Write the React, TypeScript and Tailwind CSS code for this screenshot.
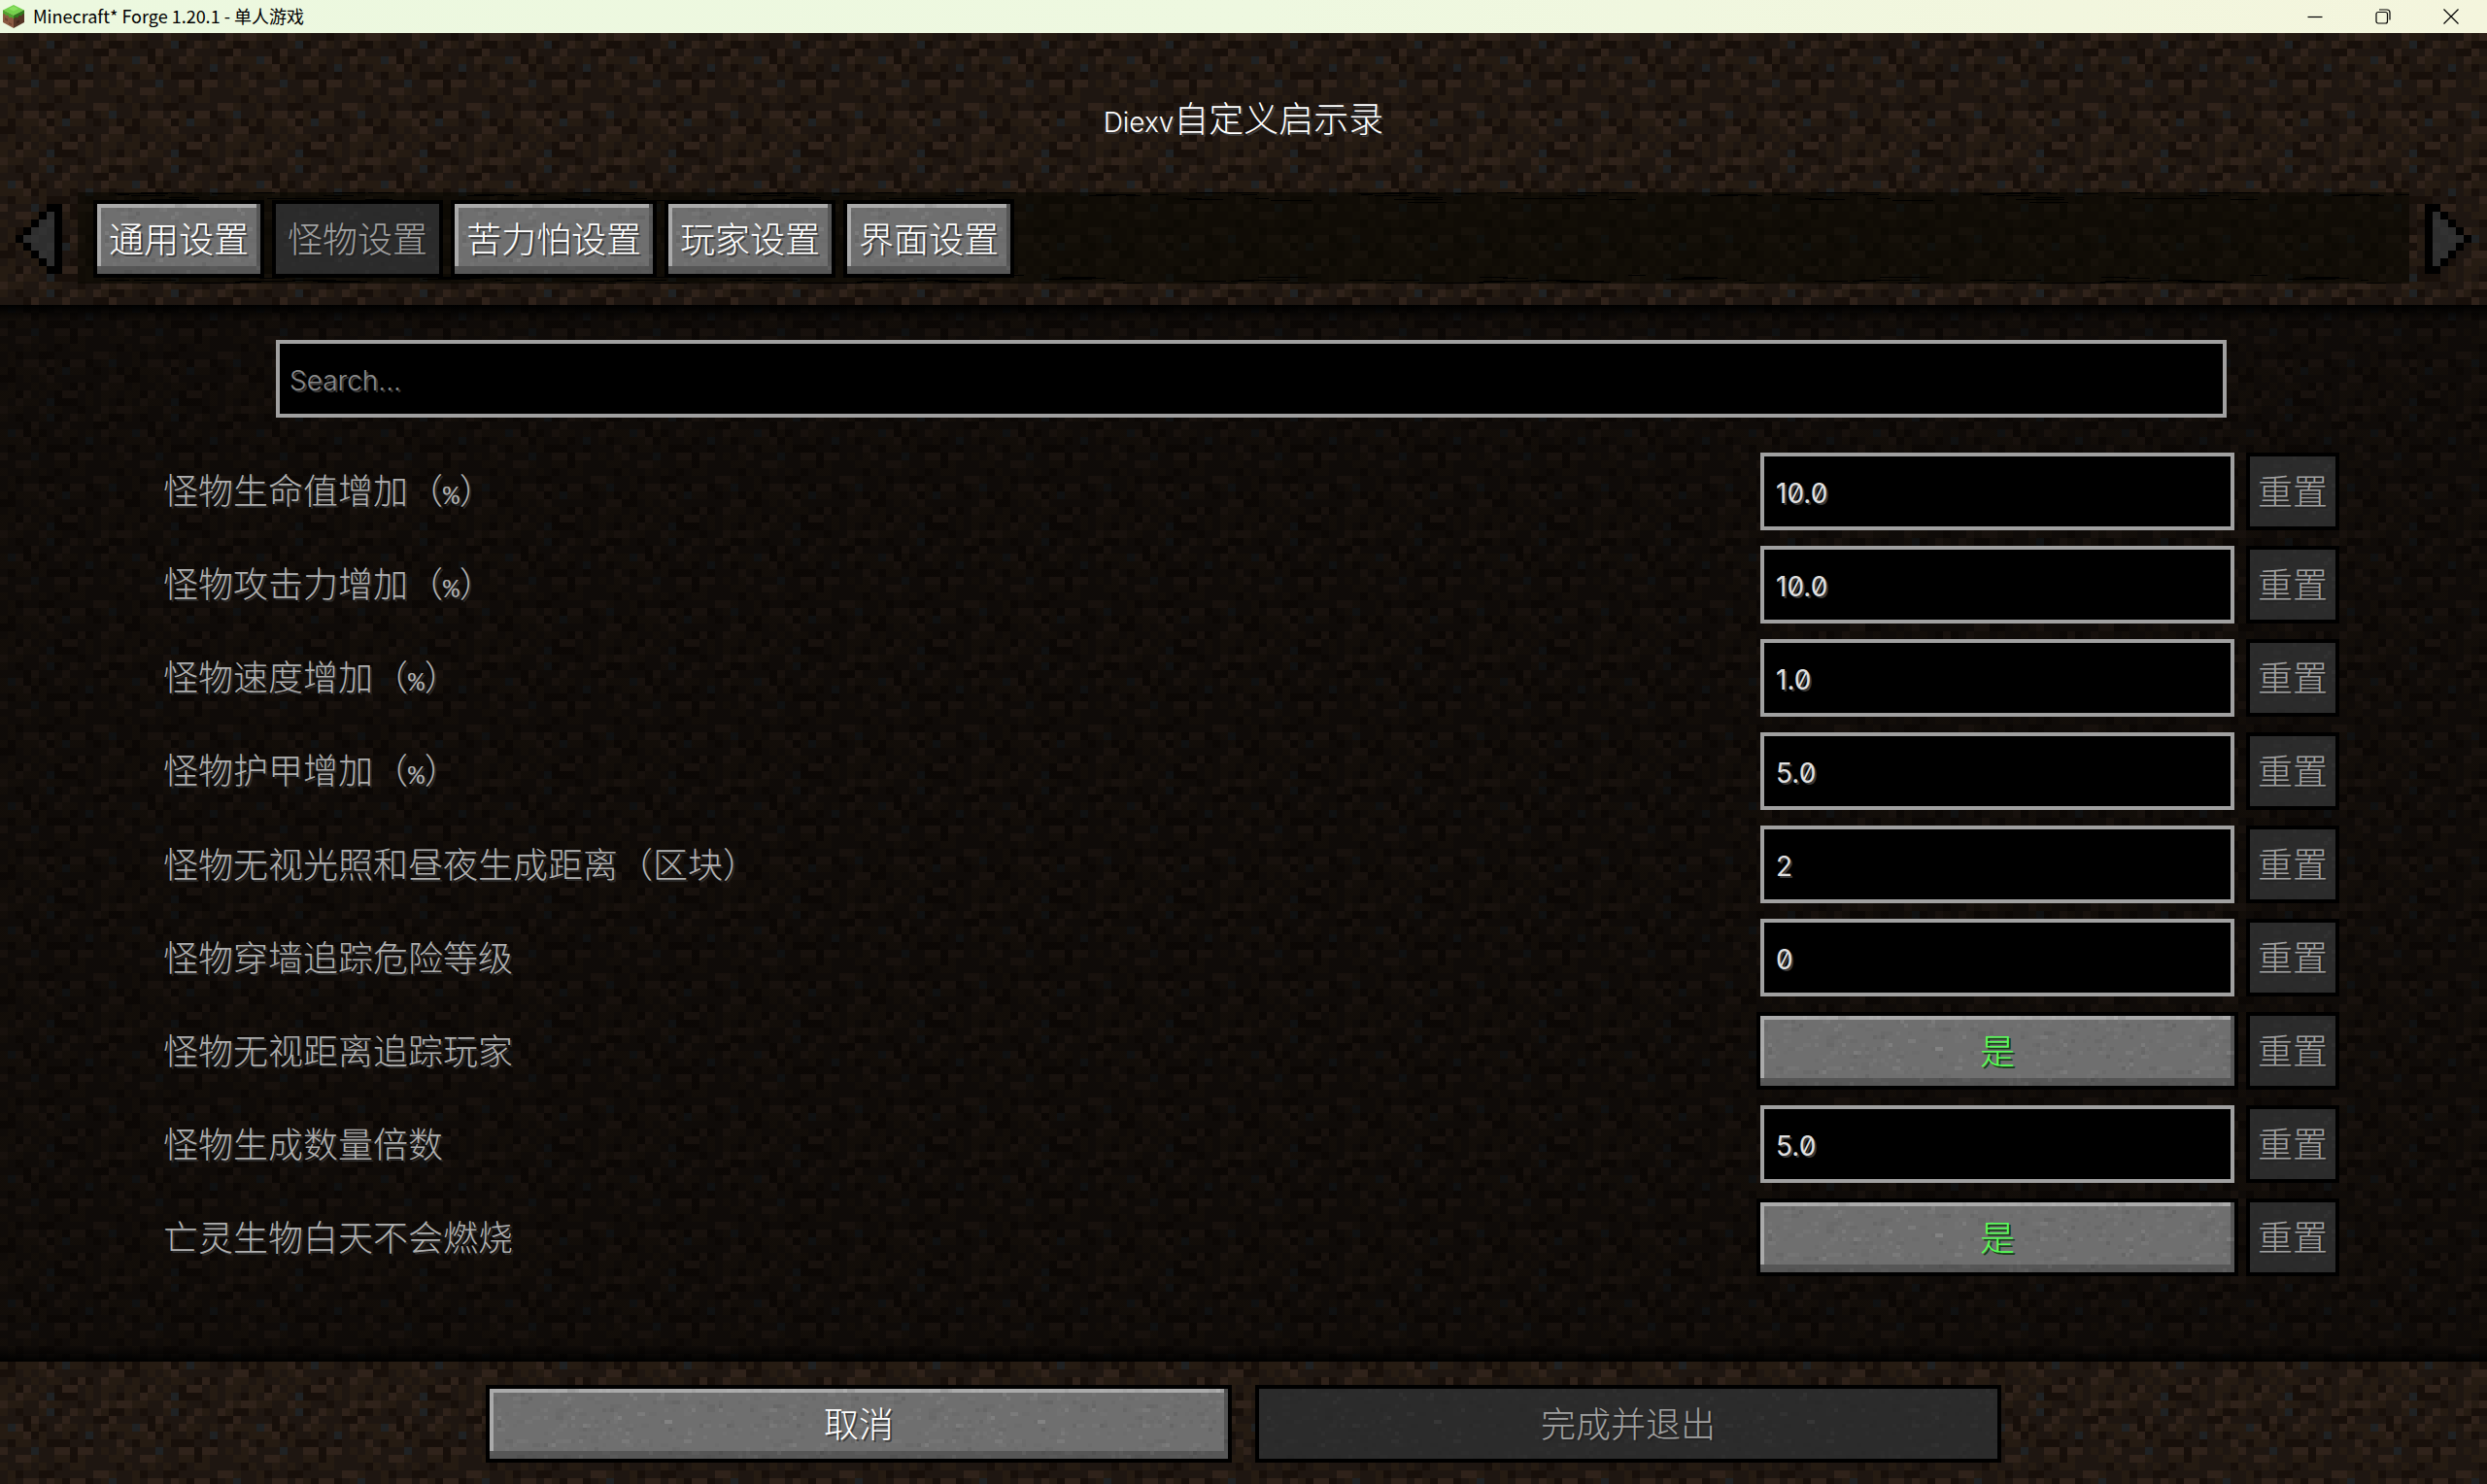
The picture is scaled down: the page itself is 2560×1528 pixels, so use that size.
import React from 'react';
import { clsx } from 'clsx';
import { twMerge } from 'tailwind-merge';

// --- Utility Functions ---
function cn(...inputs: (string | undefined | null | false)[]) {
  return twMerge(clsx(inputs));
}

// --- Data ---

// 16x16 dirt tile: L light, M medium, D dark, K darkest, G gravel
const DIRT = [
  'LMMDDLMMDDKDDLML',
  'MDKDDMGKDLMDLMKK',
  'DDDKLDDDLDDDKKLD',
  'MGLKMKDLMMDMDLMM',
  'MMMLKMDDMKDGDMKD',
  'DKMMDMKKKDDKDDDL',
  'LDDDGDDLLKLLDMDM',
  'DDLLMDDMMKMDDDMM',
  'MDDMDMDKDMMDDDDK',
  'DMKDDKKDDDDDLLMD',
  'DMDLLDLMKLLKDMGD',
  'MKMMMLKMGMMDKDMK',
  'KKDMDMLDDDDDDDLL',
  'DMDDMDMMDKLKDLMM',
  'MMKLDMDKLLDMDMMD',
  'MDLMMDGKKKDMDMDK',
];

const DIRT_COLORS: Record<string, string> = {
  L: '#2f221a',
  M: '#251b12',
  D: '#1e1611',
  K: '#170f0a',
  G: '#1f2224',
};

const ARROW = ['....##', '...#o#', '..#oo#', '.#ooo#', '#oooo#', '.#ooo#', '..#oo#', '...#o#', '....##'];

const TABS = ['通用设置', '怪物设置', '苦力怕设置', '玩家设置', '界面设置'];

interface Option {
  id: string;
  label: string;
  percent?: boolean;
  value: string | boolean;
}

const OPTIONS: Option[] = [
  { id: 'health', label: '怪物生命值增加', percent: true, value: '10.0' },
  { id: 'attack', label: '怪物攻击力增加', percent: true, value: '10.0' },
  { id: 'speed', label: '怪物速度增加', percent: true, value: '1.0' },
  { id: 'armor', label: '怪物护甲增加', percent: true, value: '5.0' },
  { id: 'spawn-distance', label: '怪物无视光照和昼夜生成距离（区块）', value: '2' },
  { id: 'wall-tracking', label: '怪物穿墙追踪危险等级', value: '0' },
  { id: 'ignore-distance', label: '怪物无视距离追踪玩家', value: true },
  { id: 'spawn-count', label: '怪物生成数量倍数', value: '5.0' },
  { id: 'no-burn', label: '亡灵生物白天不会燃烧', value: true },
];

// Small seeded generator, so the grain is the same on every render
function random(seed: number) {
  let s = seed;
  return () => {
    s = (s * 16807) % 2147483647;
    return s / 2147483647;
  };
}

const rand = random(77);
const GRAIN = Array.from({ length: 420 }, () => ({
  x: Math.floor(rand() * 96) * 4,
  y: Math.floor(rand() * 20) * 4,
  w: rand() > 0.7 ? 8 : 4,
  light: rand() > 0.5,
  o: 0.02 + rand() * rand() * 0.08,
}));

const STREAKS = Array.from({ length: 60 }, () => {
  const y = Math.floor(rand() * rand() * 12);
  return { x: Math.floor(rand() * 600), y, w: 8 + Math.floor(rand() * 44) };
});

// --- Textures ---

const Textures: React.FC = () => (
  <svg className="absolute inset-0 h-full w-full" aria-hidden="true" shapeRendering="crispEdges">
    <defs>
      <pattern id="dirt" width="128" height="128" patternUnits="userSpaceOnUse">
        {DIRT.map((row, y) =>
          row.split('').map((c, x) => (
            <rect key={`${x}-${y}`} x={x * 8} y={y * 8} width="8" height="8" fill={DIRT_COLORS[c]} />
          ))
        )}
      </pattern>
      <pattern id="grain" width="384" height="80" patternUnits="userSpaceOnUse">
        {GRAIN.map((g, i) => (
          <rect key={i} x={g.x} y={g.y} width={g.w} height="4" fill={g.light ? '#fff' : '#000'} opacity={g.o} />
        ))}
      </pattern>
      <pattern id="streaks" width="640" height="94" patternUnits="userSpaceOnUse">
        {STREAKS.map((s, i) => (
          <rect key={i} x={s.x} y={i % 2 ? s.y : 93 - s.y} width={s.w} height="1" fill="#000" />
        ))}
      </pattern>
    </defs>
    <rect width="100%" height="100%" fill="url(#dirt)" />
  </svg>
);

const Fill: React.FC<{ pattern: string; className?: string }> = ({ pattern, className }) => (
  <svg
    className={cn('pointer-events-none absolute inset-0 h-full w-full', className)}
    aria-hidden="true"
    shapeRendering="crispEdges"
  >
    <rect width="100%" height="100%" fill={`url(#${pattern})`} />
  </svg>
);

// --- Components ---

const GameButton: React.FC<React.ButtonHTMLAttributes<HTMLButtonElement>> = ({ className, children, disabled, ...props }) => (
  <button
    type="button"
    disabled={disabled}
    className={cn(
      'relative flex h-20 items-center justify-center border-4 border-black pt-0.5 text-4xl leading-none whitespace-nowrap',
      disabled
        ? 'bg-[#2b2b2b] text-[#a0a0a0] [text-shadow:2px_2px_0_#232323]'
        : 'bg-[#6f6f6f] text-white shadow-[inset_0_-8px_0_#565656,inset_-4px_0_0_#565656,inset_4px_4px_0_#aaaaaa] [text-shadow:2px_2px_0_#3e3e3e]',
      className
    )}
    {...props}
  >
    <Fill pattern="grain" className={disabled && 'opacity-40'} />
    <span className="relative">{children}</span>
  </button>
);

const TextBox: React.FC<React.InputHTMLAttributes<HTMLInputElement>> = ({ className, ...props }) => (
  <input
    type="text"
    className={cn(
      'block h-20 min-w-0 border-4 border-[#a0a0a0] bg-black pt-1 text-[28px] font-normal text-[#e0e0e0] slashed-zero outline-none [text-shadow:2px_2px_0_#383838] placeholder:font-light placeholder:text-[#8a8a8a] placeholder:opacity-100',
      className
    )}
    {...props}
  />
);

const ArrowButton: React.FC<{ label: string; flip?: boolean }> = ({ label, flip }) => (
  <button type="button" aria-label={label} disabled className="mt-3 h-[72px] w-12 shrink-0">
    <svg viewBox="0 0 6 9" className={cn('h-full w-full', flip && '-scale-x-100')} shapeRendering="crispEdges">
      {ARROW.map((row, y) =>
        row.split('').map((c, x) =>
          c === '.' ? null : (
            <rect
              key={`${x}-${y}`}
              x={x}
              y={y}
              width="1"
              height="1"
              fill={c === '#' ? '#000' : (x + y) % 3 ? '#2e2e2e' : '#323232'}
            />
          )
        )
      )}
    </svg>
  </button>
);

const GrassBlock: React.FC = () => (
  <svg viewBox="0 0 22 24" className="h-6 w-[22px]" aria-hidden="true">
    <path d="M11 0 22 5.5 11 11 0 5.5Z" fill="#74d14c" />
    <path d="M11 1.5 16 4 11 6.5 6 4Z" fill="#8ae05f" />
    <path d="M0 5.5 11 11V24L0 18Z" fill="#8a5a42" />
    <path d="M22 5.5 11 11V24L22 18Z" fill="#553526" />
    <path d="M0 5.5 11 11V14.5L9 12.5 7 13.5 5 10.5 3 11 1.5 9 0 9.5Z" fill="#4fa52f" />
    <path d="M22 5.5 11 11V14.5L13 12.5 15 13.5 17 10.5 19 11.5 20.5 9 22 9.5Z" fill="#2f7a1c" />
    <path d="M2 13 5 14.5V17L2 15.5ZM6 18 9 19.5V21L6 19.5Z" fill="#6b4230" />
    <path d="M14 17 17 15.5V18L14 19.5Z" fill="#3d251a" />
  </svg>
);

const WindowButton: React.FC<{ label: string; children: React.ReactNode }> = ({ label, children }) => (
  <button type="button" aria-label={label} className="flex h-full w-[70px] items-center justify-center">
    <svg viewBox="0 0 16 16" className="h-4 w-4" fill="none" stroke="#000" strokeWidth="1.2">
      {children}
    </svg>
  </button>
);

const TitleBar: React.FC = () => (
  <div className="flex h-[34px] items-center bg-linear-to-r from-[#ecf8df] via-[#eef8e0] to-[#f4f5dd] pr-[2px] pl-[3px]">
    <GrassBlock />
    <span className="ml-[9px] flex-1 pb-0.5 font-['Noto_Sans_CJK_SC',sans-serif] text-lg leading-none font-normal text-black">
      Minecraft* Forge 1.20.1 - 单人游戏
    </span>
    <WindowButton label="最小化">
      <path d="M0.5 8.5H15.5" />
    </WindowButton>
    <WindowButton label="还原">
      <rect x="1" y="3.5" width="11.5" height="11.5" rx="2" />
      <path d="M4 1H12a3 3 0 0 1 3 3v7.5" />
    </WindowButton>
    <WindowButton label="关闭">
      <path d="M0.5 0.5 15.5 15.5M15.5 0.5 0.5 15.5" />
    </WindowButton>
  </div>
);

const OptionRow: React.FC<{ option: Option }> = ({ option }) => {
  const [value, setValue] = React.useState(option.value);

  return (
    <div className="flex items-center gap-2">
      <label
        htmlFor={option.id}
        className="flex-1 pt-0.5 text-4xl leading-none text-[#b0b0b0] [text-shadow:2px_2px_0_#2a2a2a]"
      >
        {option.label}
        {option.percent && (
          <>
            （<span className="font-['Liberation_Mono',monospace] text-[28px] leading-none">%</span>）
          </>
        )}
      </label>
      <div className="w-[496px]">
        {typeof value === 'boolean' ? (
          <GameButton
            id={option.id}
            onClick={() => setValue(!value)}
            className={cn('w-full', value ? 'text-[#55ff55] [text-shadow:2px_2px_0_#153f15]' : 'text-[#ff5555] [text-shadow:2px_2px_0_#3f1515]')}
          >
            {value ? '是' : '否'}
          </GameButton>
        ) : (
          <div className="flex px-1">
            <TextBox id={option.id} value={value} onChange={(e) => setValue(e.target.value)} className="flex-1 px-3" />
          </div>
        )}
      </div>
      <GameButton disabled className="w-24">
        重置
      </GameButton>
    </div>
  );
};

export default function App() {
  const [tab, setTab] = React.useState(1);
  const [search, setSearch] = React.useState('');

  return (
    <div className="flex min-h-screen flex-col font-['Inter','Noto_Sans_CJK_SC',sans-serif] font-light">
      <TitleBar />
      <div className="relative flex flex-1 flex-col">
        <Textures />

        <header className="relative pb-[22px]">
          <h1 className="flex h-[164px] items-center justify-center pt-3.5 text-4xl leading-none text-white [text-shadow:2px_2px_0_#3e3e3e]">
            <span>
              <span className="text-[28px] leading-none">Diexv</span>自定义启示录
            </span>
          </h1>
          <div className="flex gap-4 px-4">
            <ArrowButton label="上一页" />
            <nav className="relative h-[94px] flex-1 bg-[#070600]/60">
              <Fill pattern="streaks" />
              <div className="relative flex gap-2 px-4 pt-2">
                {TABS.map((name, i) => (
                  <GameButton key={name} disabled={i === tab} onClick={() => setTab(i)} className="px-3">
                    {name}
                  </GameButton>
                ))}
              </div>
            </nav>
            <ArrowButton label="下一页" flip />
          </div>
        </header>

        {/* option list, shaded at both edges */}
        <main className="relative flex-1 bg-[linear-gradient(to_bottom,#000,transparent_16px,transparent_calc(100%-16px),#000),linear-gradient(#00000080,#00000080)] pt-9 pr-[152px] pb-4 pl-[168px]">
          <div className="flex px-[116px]">
            <TextBox
              aria-label="Search"
              placeholder="Search..."
              value={search}
              onChange={(e) => setSearch(e.target.value)}
              className="flex-1 px-2.5"
            />
          </div>
          <div className="mt-9 flex flex-col gap-4">
            {OPTIONS.map((option) => (
              <OptionRow key={option.id} option={option} />
            ))}
          </div>
        </main>

        <footer className="relative flex justify-center gap-6 pt-6 pb-[22px]">
          <GameButton className="w-3/10">取消</GameButton>
          <GameButton disabled className="w-3/10">
            完成并退出
          </GameButton>
        </footer>
      </div>
    </div>
  );
}
